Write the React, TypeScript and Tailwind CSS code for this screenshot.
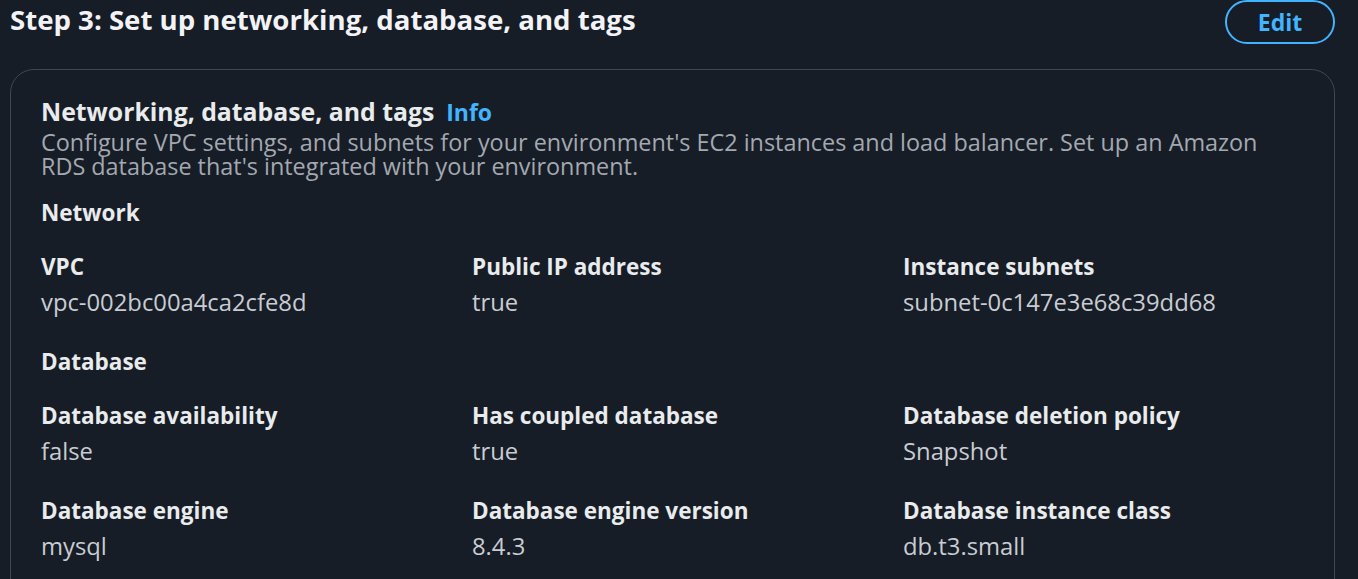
import React from "react";

type KV = { label: string; value: string };

const network: KV[] = [
  { label: "VPC", value: "vpc-002bc00a4ca2cfe8d" },
  { label: "Public IP address", value: "true" },
  { label: "Instance subnets", value: "subnet-0c147e3e68c39dd68" },
];

const database: KV[][] = [
  [
    { label: "Database availability", value: "false" },
    { label: "Has coupled database", value: "true" },
    { label: "Database deletion policy", value: "Snapshot" },
  ],
  [
    { label: "Database engine", value: "mysql" },
    { label: "Database engine version", value: "8.4.3" },
    { label: "Database instance class", value: "db.t3.small" },
  ],
];

function Row({ items }: { items: KV[] }) {
  return (
    <div className="grid grid-cols-3 gap-x-[30px]">
      {items.map((it) => (
        <div key={it.label} className="flex flex-col">
          <div className="text-[22.5px] leading-[30px] font-bold text-[#e9ebed] whitespace-nowrap">{it.label}</div>
          <div className="mt-[5px] text-[23.8px] leading-[30px] text-[#c9ccd2] whitespace-nowrap">{it.value}</div>
        </div>
      ))}
    </div>
  );
}

export default function App() {
  return (
    <div className="h-screen w-full overflow-hidden bg-[#161d26] pl-[10px] pr-[23px] font-['Open_Sans',sans-serif]">
      <div className="flex items-start justify-between">
        <h2 className="text-[27.6px] leading-[39px] font-bold text-[#f3f3f7] whitespace-nowrap">
          Step 3: Set up networking, database, and tags
        </h2>
        <button className="h-[44px] w-[110px] rounded-full border-2 border-[#42b4ff] text-[23px] font-bold leading-none text-[#42b4ff]">
          Edit
        </button>
      </div>

      <div className="mt-[25px] h-[540px] rounded-t-[24px] border border-[#424650] bg-[#161d26] px-[30px] pt-[25px]">
        <div className="flex items-baseline gap-[12px] leading-[32px]">
          <span className="text-[24.8px] font-bold text-[#e9ebed] whitespace-nowrap">Networking, database, and tags</span>
          <span className="text-[23px] font-bold text-[#42b4ff]">Info</span>
        </div>
        <div className="mt-[2px] text-[23.4px] text-[#a4a8b0]">
          <div className="h-[24px] leading-[24px] whitespace-nowrap">
            Configure VPC settings, and subnets for your environment's EC2 instances and load balancer. Set up an Amazon
          </div>
          <div className="h-[24px] leading-[24px] whitespace-nowrap">
            RDS database that's integrated with your environment.
          </div>
        </div>

        <div className="mt-[20px] text-[22.5px] leading-[30px] font-bold text-[#e9ebed]">Network</div>
        <div className="mt-[24px]">
          <Row items={network} />
        </div>

        <div className="mt-[30px] text-[22.5px] leading-[30px] font-bold text-[#e9ebed]">Database</div>
        <div className="mt-[24px]">
          <Row items={database[0]} />
        </div>
        <div className="mt-[30px]">
          <Row items={database[1]} />
        </div>
      </div>
    </div>
  );
}
